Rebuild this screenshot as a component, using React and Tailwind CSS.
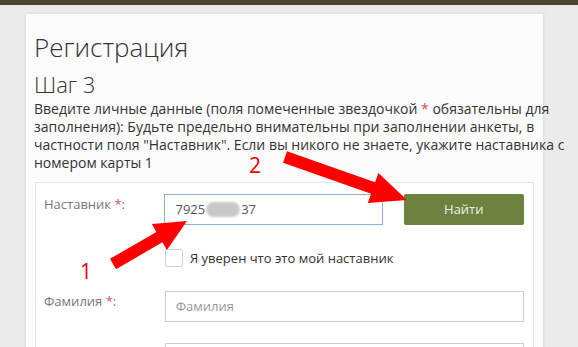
export default function App() {
  return (
    <div className="relative w-[578px] h-[347px] overflow-hidden bg-[#ebebeb] font-['Open_Sans',sans-serif]">
      <div className="h-[5px] bg-[#4b4631]" />
      <div className="ml-[25px] mt-[8px] w-[519px] h-[400px] bg-[#fcfcfc] border border-[#e3e3e3] shadow-[0_0_2px_rgba(0,0,0,0.08)] pl-[8px] pr-[9px] pt-[17px]">
        <h1 className="text-[26px] font-light leading-[32px] text-[#333]">Регистрация</h1>
        <h2 className="mt-[8px] text-[22px] font-light leading-[26px] text-[#333]">Шаг 3</h2>
        <p className="mt-[3px] text-[14px] leading-[18px] text-[#333] whitespace-nowrap">
          Введите личные данные (поля помеченные звездочкой <span className="text-[#d9534f]">*</span> обязательны для
          <br />
          заполнения): Будьте предельно внимательны при заполнении анкеты, в
          <br />
          частности поля "Наставник". Если вы никого не знаете, укажите наставника с
          <br />
          номером карты 1
        </p>
        <div className="mt-[10px] ml-px border border-[#e4e4e4] bg-white pt-[11px] pl-[8px] pr-[9px] h-[300px]">
          <div className="flex items-start">
            <div className="w-[121px] pt-[1px] text-[13px] leading-[18px] text-[#777]">
              Наставник <span className="text-[#d9534f]">*</span>:
            </div>
            <div className="w-[219px] h-[31px] border border-[#8cb1d9] bg-white px-[10px] flex items-center text-[13px] text-[#555]">
              <span>7925</span>
              <span className="inline-block w-[34px] h-[15px] mx-[1px] rounded-full bg-[#c9c9c9] blur-[1px]" />
              <span>37</span>
            </div>
            <button className="ml-[21px] w-[121px] h-[31px] rounded-[2px] bg-[#6d823f] text-[13px] text-[#eef0e6]">
              Найти
            </button>
          </div>
          <div className="mt-[24px] ml-[121px] flex items-center">
            <div className="w-[18px] h-[18px] border border-[#cfcfcf] rounded-[2px] bg-white" />
            <span className="ml-[7px] text-[13px] leading-[18px] text-[#333]">Я уверен что это мой наставник</span>
          </div>
          <div className="mt-[24px] flex items-start">
            <div className="w-[121px] pt-[1px] text-[13px] leading-[18px] text-[#777]">
              Фамилия <span className="text-[#d9534f]">*</span>:
            </div>
            <div className="w-[360px] h-[31px] border border-[#cccccc] bg-white px-[10px] flex items-center text-[13px] text-[#999]">
              Фамилия
            </div>
          </div>
          <div className="mt-[21px] flex items-start">
            <div className="w-[121px] pt-[6px]" />
            <div className="w-[360px] h-[31px] border border-[#cccccc] bg-white" />
          </div>
        </div>
      </div>

      <svg className="absolute left-0 top-0 pointer-events-none" width="578" height="347" viewBox="0 0 578 347">
        <polygon
          fill="#ff0000"
          points="110,258.8 156.4,231.9 151.9,224.1 187,221 166.9,250.1 162.4,242.3 116,269.2"
        />
        <polygon
          fill="#ff0000"
          points="287,151.3 375.1,182.3 378.4,172.9 407,200 367.8,203.1 371.1,193.7 283,162.7"
        />
      </svg>
      <div className="absolute left-[80px] top-[257px] text-[21px] leading-[28px] text-[#f20000] font-['Open_Sans',sans-serif]">1</div>
      <div className="absolute left-[249px] top-[151px] text-[21px] leading-[28px] text-[#f20000] font-['Open_Sans',sans-serif]">2</div>
    </div>
  );
}
